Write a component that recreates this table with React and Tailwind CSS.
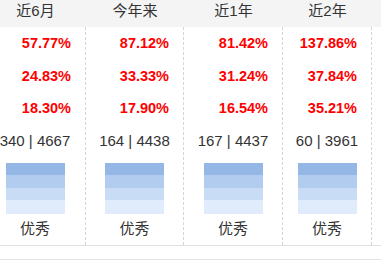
import React from 'react'

const cols = [
    { name: '近6月', w: 'w-[101px]', vals: ['57.77%', '24.83%', '18.30%'], count: '340 | 4667' },
    { name: '今年来', w: 'w-[98px]', vals: ['87.12%', '33.33%', '17.90%'], count: '164 | 4438' },
    { name: '近1年', w: 'w-[99px]', vals: ['81.42%', '31.24%', '16.54%'], count: '167 | 4437' },
    { name: '近2年', w: 'w-[89px]', vals: ['137.86%', '37.84%', '35.21%'], count: '60 | 3961' },
]

const Bars = () => (
    <div className="mx-auto mt-[6px] w-[59px]">
        <div className="h-[12px] bg-[#95b7e5]"></div>
        <div className="h-[13px] bg-[#b1ccef]"></div>
        <div className="h-[12px] bg-[#c9dcf6]"></div>
        <div className="h-[14px] bg-[#e0ebfb]"></div>
    </div>
)

const App = () => {
    return (
        <div className="w-[381px] h-[260px] overflow-hidden bg-white" style={{ fontFamily: '"Liberation Sans", "Noto Sans CJK SC", sans-serif' }}>
            <div className="flex -ml-[15px] border-b border-[#e2e2e2]">
                {cols.map((c) => (
                    <div key={c.name} className={`${c.w} shrink-0`}>
                        <div className="h-[27px] bg-[#f4f4f4] text-center text-[15px] leading-[21px] text-[#333]">
                            {c.name}
                        </div>
                        <div className="h-[218px] border-r border-dashed border-[#d6d6d6]">
                            {c.vals.map((v, i) => (
                                <div key={i} className={`${i === 2 ? 'h-[32px]' : 'h-[33px]'} flex items-center justify-end pr-[14px] text-[14.5px] font-bold text-[#ff0000]`}>
                                    {v}
                                </div>
                            ))}
                            <div className="h-[32px] flex items-center justify-center text-[15px] text-[#333]">
                                {c.count}
                            </div>
                            <Bars />
                            <div className="h-[31px] flex items-center justify-center text-[15px] text-[#333]">
                                优秀
                            </div>
                        </div>
                    </div>
                ))}
                <div className="w-[100px] shrink-0">
                    <div className="h-[27px] bg-[#f4f4f4]"></div>
                    <div className="h-[218px]"></div>
                </div>
            </div>
            <div className="h-[13px]"></div>
            <div className="border-t border-[#e2e2e2]"></div>
        </div>
    )
}

export default App
